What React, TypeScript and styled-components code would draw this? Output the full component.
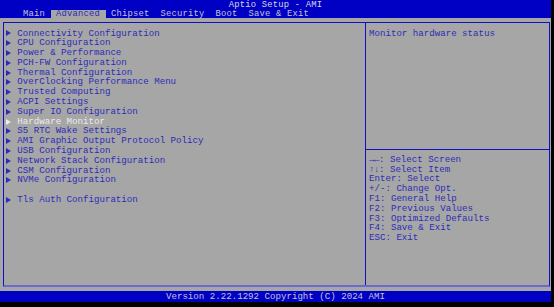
import React from "react";
import styled, { createGlobalStyle } from "styled-components";

const Global = createGlobalStyle`
  html, body { margin: 0; padding: 0; background: #000; }
  body { width: 554px; height: 307px; overflow: hidden; }
  * { box-sizing: border-box; }
`;

const BLUE = "#0000c4";
const GRAY = "#a6a6a6";
const TEXT = "#2c2cb8";
const LINE = "#1010c0";

const Screen = styled.div`
  width: 551px;
  height: 302px;
  display: flex;
  flex-direction: column;
  font-family: "Liberation Mono", "DejaVu Sans Mono", monospace;
  font-size: 9.15px;
  background: ${GRAY};
`;

const Header = styled.div`
  background: ${BLUE};
  height: 18px;
  display: flex;
  flex-direction: column;
  font-size: 8.8px;
  letter-spacing: 0.22px;
`;

const Title = styled.div`
  height: 9.5px;
  padding-top: 0.5px;
  line-height: 9px;
  text-align: center;
  color: #d8d8e8;
  white-space: pre;
`;

const Tabs = styled.div`
  height: 8.5px;
  display: flex;
  padding-left: 17.5px;
  align-items: stretch;
`;

const Tab = styled.div<{ $active?: boolean }>`
  line-height: 9.5px;
  padding: 0 5.5px;
  white-space: pre;
  background: ${(p) => (p.$active ? GRAY : "transparent")};
  color: ${(p) => (p.$active ? TEXT : "#c4c4d8")};
`;

const Body = styled.div`
  flex: 1;
  padding: 4px 1px 4px 3px;
  display: flex;
`;

const Box = styled.div`
  flex: 1;
  border: 1px solid ${LINE};
  border-bottom: 2px solid #6a6ad0;
  display: grid;
  grid-template-columns: 362px 1fr;
`;

const LeftPane = styled.div`
  border-right: 1px solid ${LINE};
  padding: 5.5px 0 0 2px;
`;

const Row = styled.div<{ $selected?: boolean }>`
  height: 9.8px;
  line-height: 9.8px;
  display: flex;
  align-items: center;
  white-space: pre;
  color: ${(p) => (p.$selected ? "#ececec" : TEXT)};
`;

const Arrow = styled.span<{ $selected?: boolean }>`
  width: 11.3px;
  flex: none;
  display: flex;
  align-items: center;
  &::before {
    content: "";
    display: block;
    width: 0;
    height: 0;
    border-top: 3px solid transparent;
    border-bottom: 3px solid transparent;
    border-left: 5px solid ${(p) => (p.$selected ? "#ececec" : TEXT)};
  }
`;

const Blank = styled.div`
  height: 9.8px;
`;

const RightPane = styled.div`
  display: grid;
  grid-template-rows: 127px 1fr;
`;

const HelpTop = styled.div`
  border-bottom: 1px solid ${LINE};
  padding: 5.5px 0 0 3px;
  color: ${TEXT};
  line-height: 9.8px;
  white-space: pre;
`;

const Keys = styled.div`
  padding: 4.9px 0 0 3px;
  color: ${TEXT};
`;

const KeyLine = styled.div`
  height: 9.8px;
  line-height: 9.8px;
  white-space: pre;
`;

const KeyGlyph = styled.span`
  font-weight: bold;
  letter-spacing: -0.5px;
`;

const Footer = styled.div`
  height: 11px;
  line-height: 12px;
  background: ${BLUE};
  color: #c4c4d8;
  text-align: center;
  white-space: pre;
`;

type Item = { label: string; selected?: boolean } | null;

const items: Item[] = [
  { label: "Connectivity Configuration" },
  { label: "CPU Configuration" },
  { label: "Power & Performance" },
  { label: "PCH-FW Configuration" },
  { label: "Thermal Configuration" },
  { label: "OverClocking Performance Menu" },
  { label: "Trusted Computing" },
  { label: "ACPI Settings" },
  { label: "Super IO Configuration" },
  { label: "Hardware Monitor", selected: true },
  { label: "S5 RTC Wake Settings" },
  { label: "AMI Graphic Output Protocol Policy" },
  { label: "USB Configuration" },
  { label: "Network Stack Configuration" },
  { label: "CSM Configuration" },
  { label: "NVMe Configuration" },
  null,
  { label: "Tls Auth Configuration" },
];

const keys: { glyph?: string; text: string }[] = [
  { glyph: "\u2192\u2190", text: ": Select Screen" },
  { glyph: "\u2191\u2193", text: ": Select Item" },
  { text: "Enter: Select" },
  { text: "+/-: Change Opt." },
  { text: "F1: General Help" },
  { text: "F2: Previous Values" },
  { text: "F3: Optimized Defaults" },
  { text: "F4: Save & Exit" },
  { text: "ESC: Exit" },
];

const tabs = ["Main", "Advanced", "Chipset", "Security", "Boot", "Save & Exit"];

export default function App() {
  return (
    <>
      <Global />
      <Screen>
        <Header>
          <Title>Aptio Setup - AMI</Title>
          <Tabs>
            {tabs.map((t) => (
              <Tab key={t} $active={t === "Advanced"}>
                {t}
              </Tab>
            ))}
          </Tabs>
        </Header>
        <Body>
          <Box>
            <LeftPane>
              {items.map((it, i) =>
                it ? (
                  <Row key={i} $selected={it.selected}>
                    <Arrow $selected={it.selected} />
                    {it.label}
                  </Row>
                ) : (
                  <Blank key={i} />
                )
              )}
            </LeftPane>
            <RightPane>
              <HelpTop>Monitor hardware status</HelpTop>
              <Keys>
                {keys.map((k) => (
                  <KeyLine key={k.text}>
                    {k.glyph && <KeyGlyph>{k.glyph}</KeyGlyph>}
                    {k.text}
                  </KeyLine>
                ))}
              </Keys>
            </RightPane>
          </Box>
        </Body>
        <Footer>Version 2.22.1292 Copyright (C) 2024 AMI</Footer>
      </Screen>
    </>
  );
}
